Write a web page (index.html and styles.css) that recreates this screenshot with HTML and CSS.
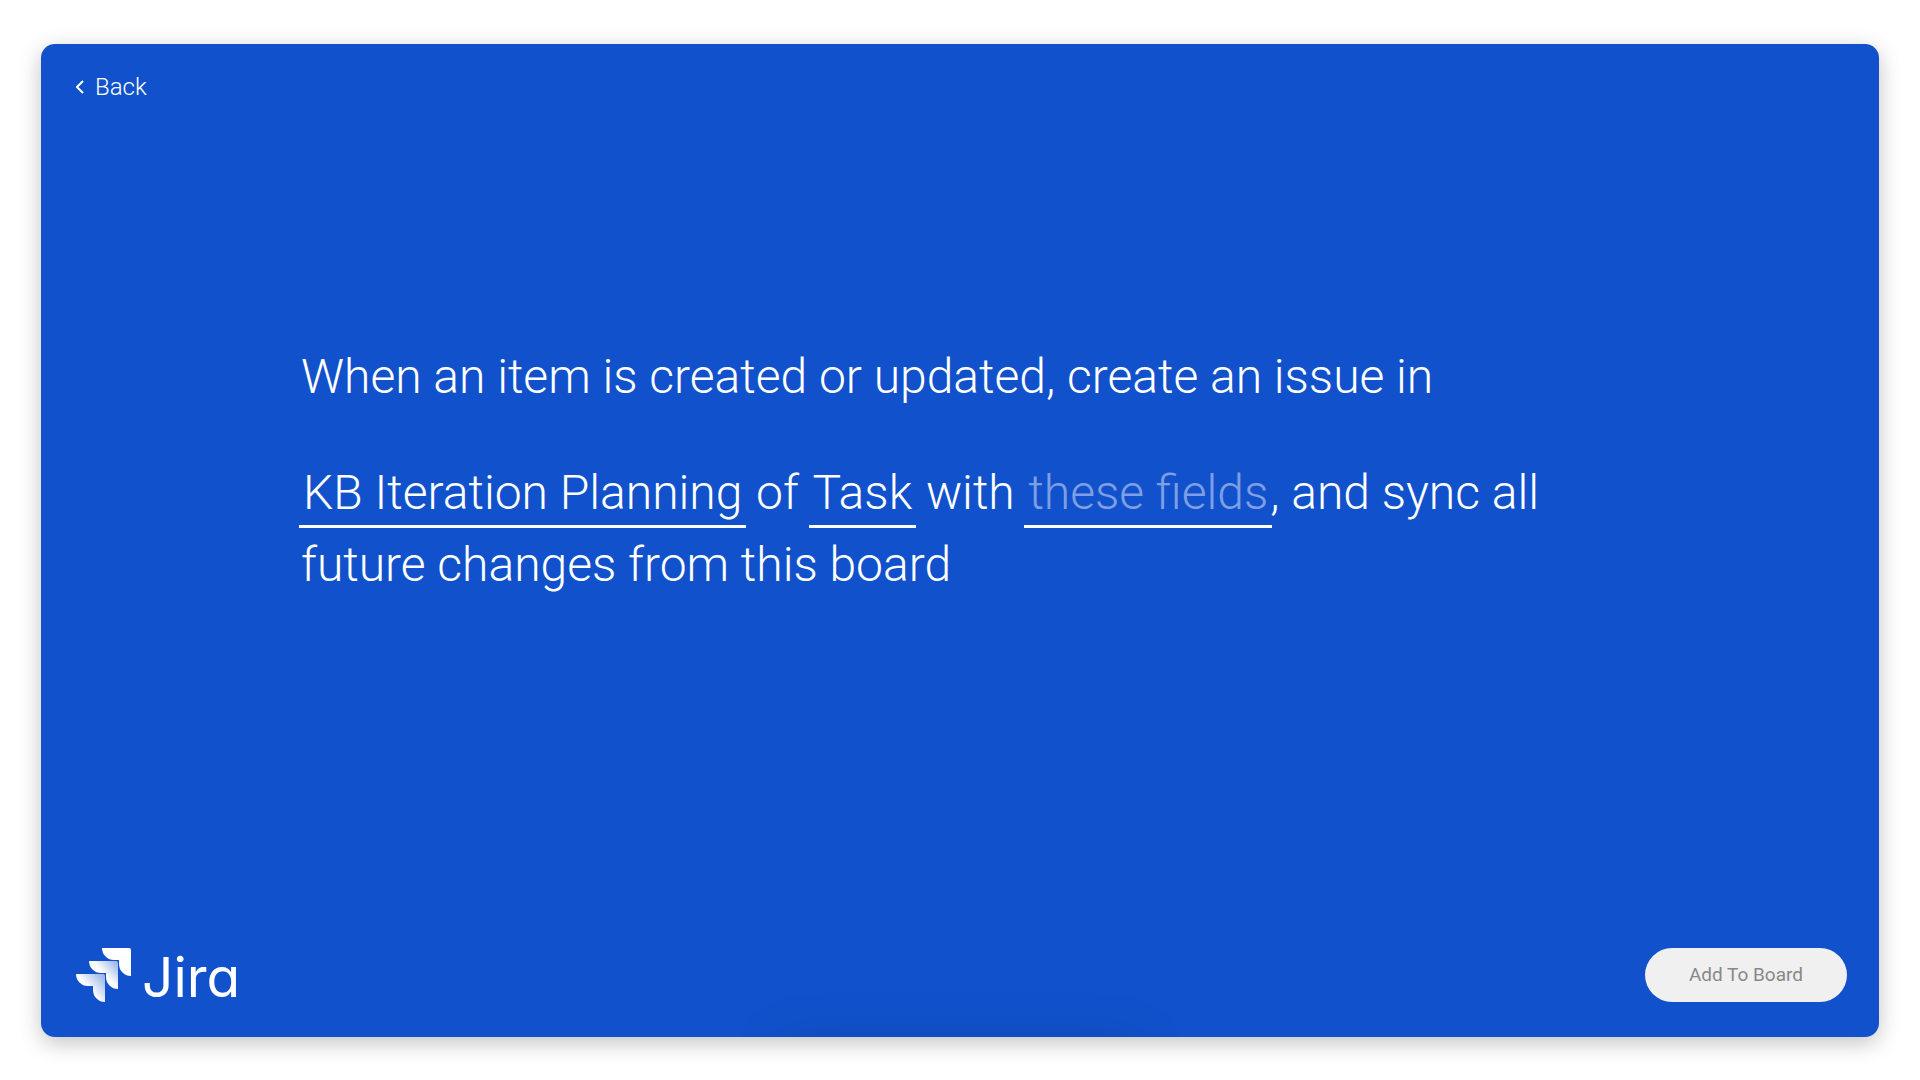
FILE: index.html
```html
<!DOCTYPE html>
<html lang="en">
<head>
  <meta charset="UTF-8">
  <meta name="viewport" content="width=device-width, initial-scale=1.0">
  <title>Jira integration</title>
  <link rel="stylesheet" href="styles.css">
</head>
<body>

<main class="card">
  <button class="back" type="button">
    <svg class="back-icon" viewBox="0 0 10 14" aria-hidden="true">
      <path d="M7 1 L1 7 L7 13"/>
    </svg>
    Back
  </button>

  <p class="recipe">
    When an item is created or updated, create an issue in
    <button class="slot" type="button">KB Iteration Planning</button>
    of
    <button class="slot" type="button">Task</button>
    with
    <button class="slot empty" type="button">these fields</button>, and sync all future changes from this board
  </p>

  <footer class="footer">
    <div class="logo">
      <svg class="logo-icon" viewBox="0 0 55 54" aria-hidden="true">
        <defs>
          <linearGradient id="fade-mid" gradientUnits="userSpaceOnUse" x1="42" y1="15" x2="29" y2="27">
            <stop offset="0.1" stop-color="#fff" stop-opacity="0.6"/>
            <stop offset="1" stop-color="#fff"/>
          </linearGradient>
          <linearGradient id="fade-low" gradientUnits="userSpaceOnUse" x1="29" y1="29" x2="14" y2="42">
            <stop offset="0.1" stop-color="#fff" stop-opacity="0.6"/>
            <stop offset="1" stop-color="#fff"/>
          </linearGradient>
        </defs>
        <path fill="#fff" d="M26 0 H53 Q55 0 55 2 V28 A12 12 0 0 1 43 16 V12 H38 A12 12 0 0 1 26 0 Z"/>
        <path fill="url(#fade-mid)" d="M13 13 H40 Q42 13 42 15 V41 A12 12 0 0 1 30 29 V25 H25 A12 12 0 0 1 13 13 Z"/>
        <path fill="url(#fade-low)" d="M0 26 H27 Q29 26 29 28 V54 A12 12 0 0 1 17 42 V38 H12 A12 12 0 0 1 0 26 Z"/>
      </svg>
      <span class="logo-name">Jira</span>
    </div>
    <button class="add" type="button">Add To Board</button>
  </footer>
</main>

</body>
</html>
```

FILE: styles.css
```css
* {
  box-sizing: border-box;
}

body {
  display: flex;
  min-height: 100vh;
  margin: 0;
  padding: 44px 41px 43px;
  background: #fff;
  font-family: Roboto, sans-serif;
}

button {
  border: 0;
  font-family: inherit;
  cursor: pointer;
}

.card {
  position: relative;
  display: flex;
  flex: 1;
  flex-direction: column;
  align-items: flex-start;
  padding: 28px 32px 35px 35px;
  overflow: hidden;
  border-radius: 14px;
  background: #1152cc;
  box-shadow: 0 6px 22px rgba(0, 0, 0, 0.24);
  color: #fff;
}

/* soft shade at the bottom edge */
.card::after {
  content: "";
  position: absolute;
  top: 100%;
  left: 50%;
  width: 380px;
  height: 60px;
  margin-left: -190px;
  border-radius: 30px;
  box-shadow: 0 0 50px rgba(0, 0, 0, 0.12);
}

.back {
  display: flex;
  align-items: center;
  gap: 9px;
  padding: 0;
  background: none;
  color: #fff;
  font-size: 24px;
  font-weight: 300;
  line-height: 30px;
}

.back-icon {
  width: 10px;
  height: 14px;
  fill: none;
  stroke: #fff;
  stroke-width: 2;
}

.recipe {
  max-width: 1320px;
  margin: 239px 0 60px 225px;
  font-size: 48px;
  font-weight: 300;
  line-height: 72px;
}

.slot {
  margin: 48px -2px 0;
  padding: 0 4px;
  border-bottom: 3px solid #fff;
  background: none;
  color: #fff;
  font-size: 48px;
  font-weight: 300;
  line-height: 64px;
}

.slot.empty {
  color: #7f9ee4;
}

.footer {
  display: flex;
  align-items: center;
  align-self: stretch;
  justify-content: space-between;
  margin-top: auto;
}

.logo {
  display: flex;
  align-items: center;
  gap: 11px;
}

.logo-icon {
  width: 55px;
  height: 54px;
}

.logo-name {
  padding-top: 4px;
  font-family: Inter, sans-serif;
  font-feature-settings: "cv11";
  font-size: 55px;
  line-height: 50px;
}

.add {
  padding: 0 44px;
  border-radius: 27px;
  background: #f0f0f0;
  color: #888;
  font-size: 19px;
  line-height: 54px;
}
```
